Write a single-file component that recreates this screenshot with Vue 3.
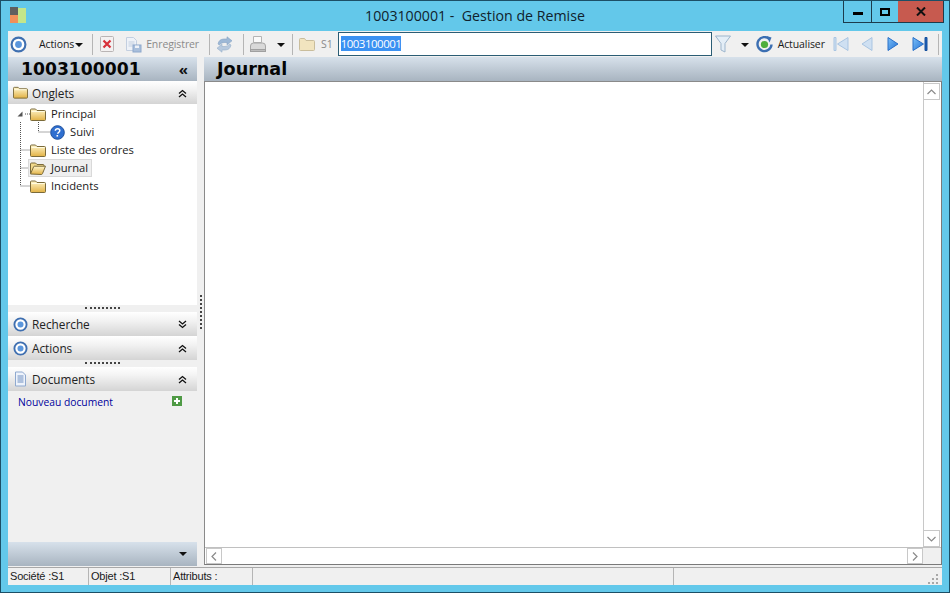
<template>
  <div class="window">
    <svg class="defs" width="0" height="0">
      <defs>
        <linearGradient id="fold" x1="0" y1="0" x2="0" y2="1">
          <stop offset="0" stop-color="#fff6cc" />
          <stop offset="1" stop-color="#e2b245" />
        </linearGradient>
        <linearGradient id="nav" x1="0" y1="0" x2="1" y2="1">
          <stop offset="0" stop-color="#7cc0f8" />
          <stop offset="1" stop-color="#2270d4" />
        </linearGradient>
        <symbol id="folder" viewBox="0 0 16 13">
          <path d="M.5 11.500V2q0-1 1-1h4l1.500 1.500h7.500q1 0 1 1v8q0 1-1 1h-13q-1 0-1-1z" fill="url(#fold)" stroke="#7a6a3a" />
          <path d="M1.500 3.500h13" stroke="#fffbe0" fill="none" />
        </symbol>
        <symbol id="folder-open" viewBox="0 0 16 13">
          <path d="M.5 11.500V2q0-1 1-1h4l1.500 1.500h6q1 0 1 1v1" fill="#f1d98b" stroke="#7a6a3a" />
          <path d="M.5 12l3-7q.3-.8 1-.8h11l-3 7.400q-.3.900-1.100.900z" fill="url(#fold)" stroke="#7a6a3a" />
        </symbol>
        <symbol id="target" viewBox="0 0 16 16">
          <circle cx="8" cy="8" r="6.500" fill="#fff" stroke="#3f6fb0" stroke-width="2" />
          <circle cx="8" cy="8" r="3.200" fill="#5b96dc" />
        </symbol>
        <symbol id="chev-up" viewBox="0 0 9 9">
          <path d="M1 4.500l3.500-3 3.500 3M1 8l3.500-3 3.500 3" fill="none" stroke="#111" stroke-width="1.300" />
        </symbol>
        <symbol id="chev-down" viewBox="0 0 9 9">
          <path d="M1 1l3.500 3 3.500-3M1 4.500l3.500 3 3.500-3" fill="none" stroke="#111" stroke-width="1.300" />
        </symbol>
      </defs>
    </svg>

    <header class="titlebar">
      <svg class="app-logo" width="16" height="16" viewBox="0 0 16 16">
        <rect x="0" y="0" width="8" height="8" fill="#5f5f5f" />
        <rect x="0" y="8" width="8" height="8" fill="#f0905a" />
        <rect x="8" y="1" width="8" height="15" fill="#c4e68a" />
      </svg>
      <div class="title">1003100001 -&nbsp; Gestion de Remise</div>
      <div class="win-btns">
        <div class="win-btn min"><span></span></div>
        <div class="win-btn max"><span></span></div>
        <div class="win-btn close">
          <svg width="10" height="9" viewBox="0 0 10 9"><path d="M1 .5l8 8M9 .5l-8 8" stroke="#111" stroke-width="2" /></svg>
        </div>
      </div>
    </header>

    <div class="client">
      <div class="toolbar">
        <svg class="tb-target" width="17" height="17"><use href="#target" /></svg>
        <span class="tb-text actions">Actions</span>
        <span class="caret"></span>
        <span class="sep sep-0"></span>
        <svg class="ic-del" width="14" height="16" viewBox="0 0 14 16">
          <rect x=".5" y=".5" width="13" height="15" rx="1" fill="#f3f1f1" stroke="#b9b4b4" />
          <path d="M3.500 4.500l7 7M10.500 4.500l-7 7" stroke="#d8303a" stroke-width="2.200" />
        </svg>
        <svg class="ic-save" width="17" height="17" viewBox="0 0 17 17">
          <path d="M1.500 1.500h7l3 3v10h-10z" fill="#eef2f8" stroke="#c3cfe0" />
          <path d="M3.500 6h6M3.500 8h6M3.500 10h4" stroke="#c3cfe0" />
          <rect x="8" y="9" width="8" height="7" fill="#a9bfdc" stroke="#8ea8cc" />
          <rect x="10" y="9.500" width="4" height="2.500" fill="#eef2f8" />
        </svg>
        <span class="tb-text off save-text">Enregistrer</span>
        <span class="sep sep-a"></span>
        <svg class="ic-sync" width="17" height="17" viewBox="0 0 17 17">
          <path d="M2 8q1-5 6-5h3V.8l5 4-5 4V6.500H8q-3 0-4.500 2.500z" fill="#9db8d6" stroke="#86a3c4" stroke-width=".6" />
          <path d="M15 9q-1 5-6 5H6v2.200l-5-4 5-4v2.300h3q3 0 4.500-2.500z" fill="#b7c9de" stroke="#96aec9" stroke-width=".6" />
        </svg>
        <span class="sep sep-b"></span>
        <svg class="ic-print" width="18" height="18" viewBox="0 0 18 18">
          <path d="M4.500 1.500h8v6h-8z" fill="#fafafa" stroke="#b4b4b4" />
          <path d="M1.500 11q0-3 3-3h9q3 0 3 3v3.500h-15z" fill="#d9d9d9" stroke="#a6a6a6" />
          <rect x="1.500" y="14.500" width="15" height="2" fill="#bdbdbd" stroke="#a0a0a0" />
        </svg>
        <span class="caret caret-print"></span>
        <span class="sep sep-c"></span>
        <svg class="ic-s1" width="16" height="14" viewBox="0 0 16 14">
          <path d="M.5 12.500V2.500q0-1 1-1h4l1.500 2h7.500q1 0 1 1v8q0 1-1 1h-13q-1 0-1-1z" fill="#f1e4bf" stroke="#c9bd9c" />
        </svg>
        <span class="tb-text off s1">S1</span>
        <div class="search"><span class="selected">1003100001</span></div>
        <svg class="ic-filter" width="16" height="18" viewBox="0 0 16 18">
          <path d="M.5 1h15l-5.500 7.500v8.500l-4-2v-6.500z" fill="#e4eef7" stroke="#9db5cc" />
        </svg>
        <span class="caret caret-filter"></span>
        <svg class="ic-refresh" width="17" height="17" viewBox="0 0 17 17">
          <path d="M13.500 3.200a7 7 0 1 0 2 5.300" fill="none" stroke="#3c6fb2" stroke-width="2.400" />
          <path d="M10.500 0l5 1.500-2 5z" fill="#3c6fb2" />
          <circle cx="8.500" cy="8.500" r="3.600" fill="#4fae3c" />
        </svg>
        <span class="tb-text refresh-text">Actualiser</span>
        <svg class="nav nav-first" width="16" height="16" viewBox="0 0 16 16">
          <path d="M1 1.500h2v13H1zM15 1.500v13L4.500 8z" fill="#cfe0f2" stroke="#a9c5e2" />
        </svg>
        <svg class="nav nav-prev" width="12" height="16" viewBox="0 0 12 16">
          <path d="M11 1.500v13L1 8z" fill="#cfe0f2" stroke="#a9c5e2" />
        </svg>
        <svg class="nav nav-next" width="12" height="16" viewBox="0 0 12 16">
          <path d="M1 1.500v13L11 8z" fill="url(#nav)" stroke="#2a70c8" />
        </svg>
        <svg class="nav nav-last" width="16" height="16" viewBox="0 0 16 16">
          <path d="M1 1.500v13L11.500 8z" fill="url(#nav)" stroke="#2a70c8" />
          <path d="M13 1.500h2v13h-2z" fill="#1d5fb8" stroke="#17509c" />
        </svg>
        <span class="sep sep-end"></span>
      </div>

      <div class="main">
        <aside class="sidebar">
          <div class="side-head">
            <span class="side-title">1003100001</span>
            <span class="collapse">«</span>
          </div>

          <div class="section first">
            <svg class="sec-ic" width="15" height="13"><use href="#folder" /></svg>
            <span>Onglets</span>
            <svg class="chev" width="9" height="9"><use href="#chev-up" /></svg>
          </div>
          <div class="tree">
            <svg class="tree-lines" width="60" height="100">
              <path d="M20.500 18v64M20.500 82h10M20.500 46h10M20.500 64h8M38.500 18v10M38.500 28h12M25 10h5" fill="none" stroke="#555" stroke-dasharray="1 1" />
              <path d="M22.500 7.500v5h-5z" fill="#555" />
            </svg>
            <div class="row lvl0">
              <svg width="16" height="13"><use href="#folder" /></svg>
              <span class="lbl">Principal</span>
            </div>
            <div class="row lvl1">
              <svg width="15" height="15" viewBox="0 0 15 15">
                <circle cx="7.500" cy="7.500" r="6.800" fill="#2f6fd0" stroke="#1d4f9c" />
                <path d="M5.300 5.800q.2-2 2.300-2 2.200 0 2.200 1.800 0 1-1.100 1.700-1 .6-1 1.500" fill="none" stroke="#fff" stroke-width="1.500" />
                <rect x="6.500" y="10" width="1.600" height="1.600" fill="#fff" />
              </svg>
              <span class="lbl">Suivi</span>
            </div>
            <div class="row lvl0">
              <svg width="16" height="13"><use href="#folder" /></svg>
              <span class="lbl">Liste des ordres</span>
            </div>
            <div class="row lvl0 current">
              <svg width="16" height="13"><use href="#folder-open" /></svg>
              <span class="lbl">Journal</span>
            </div>
            <div class="row lvl0">
              <svg width="16" height="13"><use href="#folder" /></svg>
              <span class="lbl">Incidents</span>
            </div>
          </div>

          <div class="grip"><span></span></div>
          <div class="section">
            <svg class="sec-ic" width="15" height="15"><use href="#target" /></svg>
            <span>Recherche</span>
            <svg class="chev" width="9" height="9"><use href="#chev-down" /></svg>
          </div>
          <div class="section">
            <svg class="sec-ic" width="15" height="15"><use href="#target" /></svg>
            <span>Actions</span>
            <svg class="chev" width="9" height="9"><use href="#chev-up" /></svg>
          </div>
          <div class="grip"><span></span></div>
          <div class="section">
            <svg class="sec-ic" width="15" height="16" viewBox="0 0 15 16">
              <path d="M2.500 1h7l3 3v11h-10z" fill="#eef3fb" stroke="#8fa9cf" />
              <path d="M4.500 5h6M4.500 7h6M4.500 9h6M4.500 11h6" stroke="#6f8fc0" />
            </svg>
            <span>Documents</span>
            <svg class="chev" width="9" height="9"><use href="#chev-up" /></svg>
          </div>
          <div class="docs">
            <span class="doc-link">Nouveau document</span>
            <svg width="10" height="10" viewBox="0 0 10 10">
              <rect width="10" height="10" fill="#4f9a45" />
              <path d="M5 2v6M2 5h6" stroke="#fff" stroke-width="2" />
            </svg>
          </div>
          <div class="side-foot"><span class="caret"></span></div>
        </aside>

        <div class="splitter"><span></span></div>

        <section class="content">
          <div class="content-head">Journal</div>
          <div class="pane">
            <div class="pane-top">
              <div class="blank"></div>
              <div class="vscroll">
                <div class="sb-btn">
                  <svg width="9" height="6" viewBox="0 0 9 6"><path d="M.5 5l4-4 4 4" fill="none" stroke="#8a8a8a" stroke-width="1.200" /></svg>
                </div>
                <div class="sb-track"></div>
                <div class="sb-btn">
                  <svg width="9" height="6" viewBox="0 0 9 6"><path d="M.5 1l4 4 4-4" fill="none" stroke="#8a8a8a" stroke-width="1.200" /></svg>
                </div>
              </div>
            </div>
            <div class="hscroll">
              <div class="sb-btn h">
                <svg width="6" height="9" viewBox="0 0 6 9"><path d="M5 .5l-4 4 4 4" fill="none" stroke="#8a8a8a" stroke-width="1.200" /></svg>
              </div>
              <div class="sb-track"></div>
              <div class="sb-btn h">
                <svg width="6" height="9" viewBox="0 0 6 9"><path d="M1 .5l4 4-4 4" fill="none" stroke="#8a8a8a" stroke-width="1.200" /></svg>
              </div>
              <div class="corner"></div>
            </div>
          </div>
        </section>
      </div>

      <footer class="status">
        <div class="cell c1">Société :S1</div>
        <div class="cell c2">Objet :S1</div>
        <div class="cell c3">Attributs :</div>
        <div class="cell c4"></div>
        <div class="cell c5">
          <svg width="12" height="12" viewBox="0 0 12 12" fill="#a8a8a8">
            <rect x="9" y="1" width="2" height="2" />
            <rect x="5" y="5" width="2" height="2" />
            <rect x="9" y="5" width="2" height="2" />
            <rect x="1" y="9" width="2" height="2" />
            <rect x="5" y="9" width="2" height="2" />
            <rect x="9" y="9" width="2" height="2" />
          </svg>
        </div>
      </footer>
    </div>
  </div>
</template>

<script setup>
</script>

<style>
html, body { margin: 0; padding: 0; background: #63c8ea; }
</style>

<style scoped>
.window {
  width: 950px;
  height: 593px;
  box-sizing: border-box;
  border: 1px solid #1c4f66;
  background: #63c8ea;
  display: flex;
  flex-direction: column;
  padding: 0 7px 7px;
  font-family: "Open Sans", "Noto Sans", sans-serif;
  font-size: 11.5px;
  color: #1a1a1a;
  overflow: hidden;
}
.defs { position: absolute; }
.titlebar {
  height: 30px;
  flex: none;
  display: flex;
  align-items: center;
  position: relative;
}
.app-logo { margin: 0 0 2px 2px; }
.title {
  position: absolute;
  left: 0;
  right: 0;
  top: 6px;
  text-align: center;
  font-size: 14.2px;
  line-height: 18px;
  color: #10222c;
}
.win-btns {
  position: absolute;
  right: -2px;
  top: 0;
  display: flex;
  height: 21px;
  border: 1px solid #1c3b4c;
  border-top: 0;
}
.win-btn {
  height: 21px;
  display: flex;
  align-items: center;
  justify-content: center;
  box-sizing: border-box;
}
.win-btn.min { width: 28px; border-right: 1px solid #1c3b4c; }
.win-btn.min span { width: 10px; height: 3px; background: #000; margin-top: 4px; }
.win-btn.max { width: 26px; }
.win-btn.max span { width: 6px; height: 4px; border: 2px solid #000; }
.win-btn.close { width: 45px; background: #c75a4f; }

.client {
  flex: 1;
  display: flex;
  flex-direction: column;
  background: #f0f0f0;
  min-height: 0;
}
.toolbar {
  height: 26px;
  flex: none;
  display: flex;
  align-items: center;
  background: #f0f0f0;
}
.tb-target { margin-left: 2px; }
.tb-text { white-space: nowrap; font-size: 10.5px; letter-spacing: -0.1px; }
.tb-text.off { color: #8a8a8a; }
.actions { margin-left: 12px; }
.caret {
  display: inline-block;
  width: 0;
  height: 0;
  border-left: 4px solid transparent;
  border-right: 4px solid transparent;
  border-top: 4px solid #111;
}
.toolbar > .caret { margin-left: 1px; margin-top: 1px; }
.sep {
  width: 1px;
  height: 21px;
  background: #b5b5b5;
  flex: none;
  margin-left: 5px;
}
.sep-0 { margin-left: 9px; }
.ic-del { margin-left: 7px; }
.ic-save { margin-left: 11px; }
.save-text { margin-left: 4px; }
.sep-a { margin-left: 10px; }
.ic-sync { margin-left: 6px; }
.sep-b { margin-left: 10px; }
.ic-print { margin-left: 5px; }
.toolbar > .caret-print { margin-left: 10px; }
.toolbar > .sep-c { margin-left: 7px; }
.ic-s1 { margin-left: 6px; }
.s1 { margin-left: 6px; }
.search {
  width: 374px;
  height: 24px;
  box-sizing: border-box;
  margin-left: 5px;
  background: #fff;
  border: 1px solid #2b5d75;
  padding: 3px 2px 0;
  font-size: 11.5px;
  line-height: 15px;
  flex: none;
}
.selected {
  background: #3a91f2;
  color: #fff;
  display: block;
  width: 60px;
  height: 15px;
  line-height: 15px;
  letter-spacing: -0.5px;
  white-space: nowrap;
}
.ic-filter { margin-left: 3px; }
.toolbar > .caret-filter { margin-left: 10px; }
.ic-refresh { margin-left: 7px; }
.refresh-text { margin-left: 5px; color: #1a1a1a; }
.nav-first { margin-left: 8px; }
.nav-prev { margin-left: 12px; }
.nav-next { margin-left: 14px; }
.nav-last { margin-left: 13px; }
.sep-end { margin-left: 10px; }

.main { flex: 1; display: flex; min-height: 0; }
.sidebar {
  width: 189px;
  flex: none;
  display: flex;
  flex-direction: column;
  background: #f0f0f0;
  padding-bottom: 1px;
  box-sizing: border-box;
}
.side-head, .side-foot, .content-head {
  height: 24px;
  flex: none;
  background: linear-gradient(#d7e1eb, #a8b4c0);
  display: flex;
  align-items: center;
  box-sizing: border-box;
}
.side-head { padding-left: 13px; }
.side-title {
  font-family: "DejaVu Sans", sans-serif;
  font-weight: 700;
  font-size: 17.2px;
  color: #050505;
}
.collapse { margin-left: auto; margin-right: 9px; font-size: 15px; font-weight: 700; line-height: 15px; color: #111; }
.section {
  height: 24px;
  flex: none;
  display: flex;
  align-items: center;
  background: linear-gradient(#ffffff, #f3f3f3 35%, #d4d4d4);
  font-size: 11.8px;
  color: #222;
  position: relative;
}
.section.first { height: 23px; }
.sec-ic { margin-left: 5px; margin-right: 4px; flex: none; }
.chev { position: absolute; right: 10px; top: 8px; }
.tree {
  height: 201px;
  flex: none;
  background: #fff;
  box-sizing: border-box;
  position: relative;
}
.tree-lines { position: absolute; left: -8px; top: 0; pointer-events: none; }
.row {
  height: 18px;
  display: flex;
  align-items: center;
  position: relative;
  font-size: 11.2px;
}
.row svg { margin-top: 2px; flex: none; }
.row.lvl0 { padding-left: 22px; }
.row.lvl0 .lbl { margin-left: 5px; }
.row.lvl1 { padding-left: 42px; }
.row.lvl1 .lbl { margin-left: 5px; }
.row.current::before {
  content: "";
  position: absolute;
  left: 20px;
  top: 1px;
  width: 64px;
  height: 18px;
  box-sizing: border-box;
  background: #efefef;
  border: 1px solid #d9d9d9;
}
.row.current svg, .row.current .lbl { position: relative; }
.grip {
  height: 7px;
  flex: none;
  display: flex;
  justify-content: center;
  align-items: center;
  background: #f0f0f0;
}
.grip span { width: 35px; height: 2px; border-top: 2px dotted #444; }
.docs {
  flex: 1;
  display: flex;
  align-items: flex-start;
  padding: 4px 15px 0 10px;
  min-height: 0;
}
.docs svg { margin-left: auto; margin-top: 1px; }
.doc-link { color: #00009c; font-size: 10.3px; line-height: 14px; }
.side-foot { justify-content: flex-end; padding-right: 10px; }

.splitter {
  width: 7px;
  flex: none;
  display: flex;
  align-items: flex-start;
  justify-content: center;
  background: #f0f0f0;
}
.splitter span { height: 34px; margin-top: 238px; border-left: 2px dotted #444; margin-left: 1px; }
.content {
  flex: 1;
  min-width: 0;
  display: flex;
  flex-direction: column;
}
.content-head {
  font-family: "DejaVu Sans", sans-serif;
  font-weight: 700;
  font-size: 17.6px;
  color: #050505;
  padding-left: 13px;
}
.pane {
  flex: 1;
  min-height: 0;
  display: flex;
  flex-direction: column;
  background: #fff;
  border: 1px solid #8a8a8a;
  border-right-color: #7a7a7a;
  border-bottom-color: #7a7a7a;
  margin-bottom: 2px;
}
.pane-top { flex: 1; min-height: 0; display: flex; }
.blank { flex: 1; }
.vscroll {
  width: 17px;
  flex: none;
  display: flex;
  flex-direction: column;
  border-left: 1px solid #c8c8c8;
  box-sizing: border-box;
  margin-right: 1px;
  padding-top: 1px;
}
.vscroll .sb-btn { margin-left: -1px; width: 17px; }
.sb-track { flex: 1; background: #fff; }
.sb-btn {
  height: 17px;
  width: 16px;
  flex: none;
  box-sizing: border-box;
  border: 1px solid #c8c8c8;
  background: #fff;
  display: flex;
  align-items: center;
  justify-content: center;
}
.hscroll {
  height: 17px;
  flex: none;
  display: flex;
  border-top: 1px solid #c0c0c0;
  box-sizing: border-box;
  padding-left: 1px;
}
.sb-btn.h { height: 16px; }
.corner { width: 18px; background: #f0f0f0; }

.status {
  height: 18px;
  flex: none;
  display: flex;
  background: #f0f0f0;
  border-top: 1px solid #a8a8a8;
  box-sizing: border-box;
  font-family: "Liberation Sans", Arial, sans-serif;
  font-size: 11px;
  letter-spacing: -0.2px;
}
.cell {
  box-sizing: border-box;
  border-right: 1px solid #b5b5b5;
  padding-left: 2px;
  line-height: 17px;
  white-space: nowrap;
}
.c1 { width: 81px; }
.c2 { width: 82px; }
.c3 { width: 82px; }
.c4 { width: 421px; }
.c5 { flex: 1; border-right: 0; display: flex; justify-content: flex-end; align-items: flex-end; padding-right: 3px; }
</style>
